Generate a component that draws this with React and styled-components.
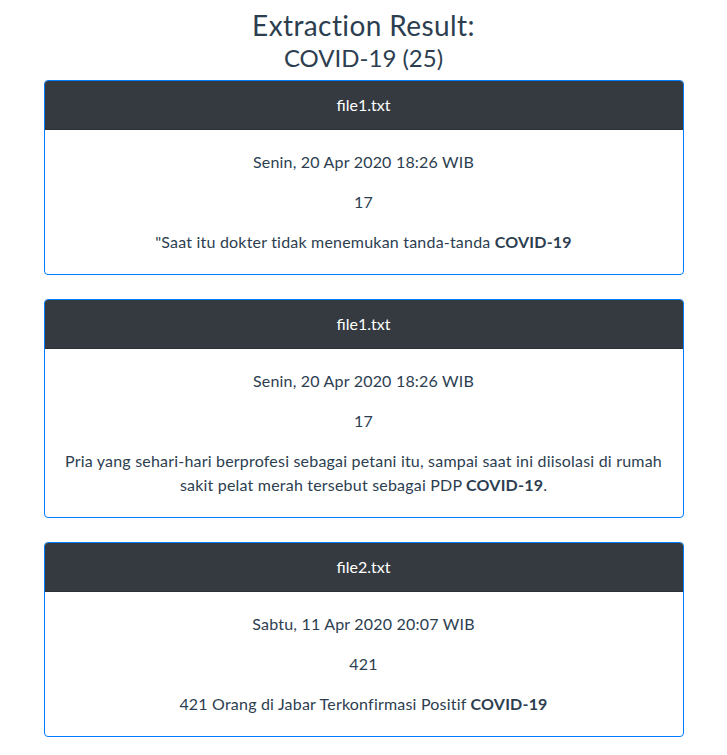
import React from 'react'
import styled, { createGlobalStyle } from 'styled-components'

const GlobalStyle = createGlobalStyle`
    body {
        margin: 0;
        background: #fff;
        font-family: Lato, 'Noto Sans', sans-serif;
        color: #2c3e50;
    }
`

const Page = styled.div`
    width: 640px;
    margin: 0 auto;
    padding-top: 8px;
`

const Title = styled.h1`
    margin: 0;
    text-align: center;
    font-weight: 400;
    font-size: 28px;
    line-height: 34px;
    letter-spacing: 0.4px;
`

const Subtitle = styled.h2`
    margin: 0 0 6px;
    text-align: center;
    font-weight: 400;
    font-size: 24px;
    line-height: 32px;
`

const Card = styled.div`
    border: 1px solid #007bff;
    border-radius: 4px;
    overflow: hidden;
    margin-bottom: 24px;
`

const CardHeader = styled.div`
    background: #343a40;
    color: #fff;
    text-align: center;
    font-size: 16px;
    line-height: 24px;
    padding: 12px 20px;
    border-bottom: 1px solid rgba(0, 0, 0, 0.125);
`

const CardBody = styled.div`
    padding: 20px;
    text-align: center;
    font-size: 16px;
    line-height: 24px;
    letter-spacing: 0.2px;

    p {
        margin: 0 0 16px;
    }
    p:last-child {
        margin-bottom: 0;
    }
`

const results = [
    {
        file: 'file1.txt',
        date: 'Senin, 20 Apr 2020 18:26 WIB',
        num: '17',
        text: '"Saat itu dokter tidak menemukan tanda-tanda ',
        after: '',
    },
    {
        file: 'file1.txt',
        date: 'Senin, 20 Apr 2020 18:26 WIB',
        num: '17',
        text: 'Pria yang sehari-hari berprofesi sebagai petani itu, sampai saat ini diisolasi di rumah sakit pelat merah tersebut sebagai PDP ',
        after: '.',
    },
    {
        file: 'file2.txt',
        date: 'Sabtu, 11 Apr 2020 20:07 WIB',
        num: '421',
        text: '421 Orang di Jabar Terkonfirmasi Positif ',
        after: '',
    },
]

export default function App() {
    return (
        <Page>
            <GlobalStyle />
            <Title>Extraction Result:</Title>
            <Subtitle>COVID-19 (25)</Subtitle>
            {results.map((r, i) => (
                <Card key={i}>
                    <CardHeader>{r.file}</CardHeader>
                    <CardBody>
                        <p>{r.date}</p>
                        <p>{r.num}</p>
                        <p>
                            {r.text}
                            <b>COVID-19</b>
                            {r.after}
                        </p>
                    </CardBody>
                </Card>
            ))}
        </Page>
    )
}
